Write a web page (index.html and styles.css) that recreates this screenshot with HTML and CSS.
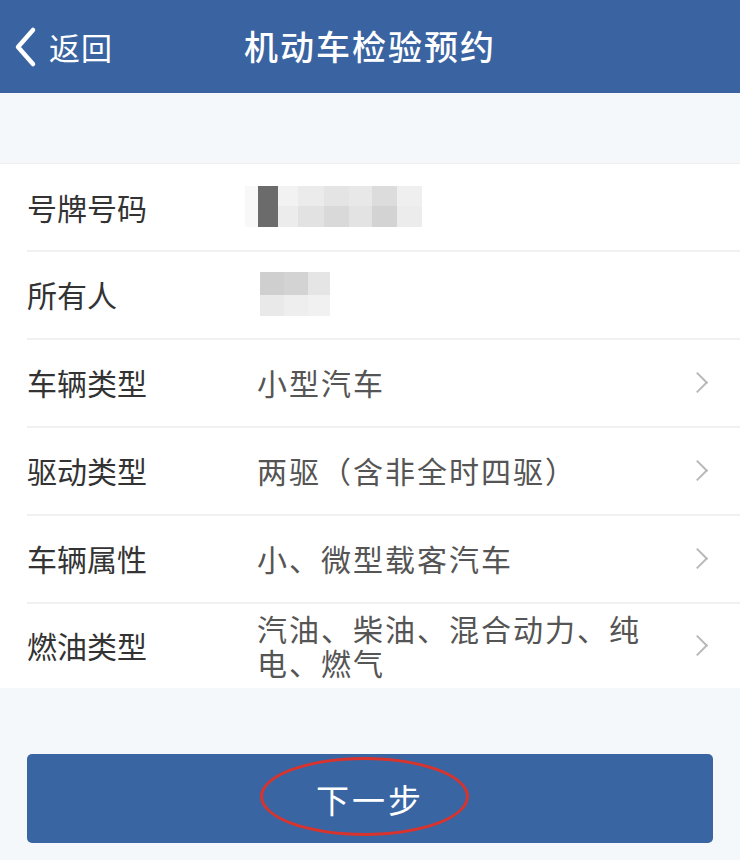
FILE: index.html
```html
<!DOCTYPE html>
<html lang="zh-CN">
<head>
    <meta charset="UTF-8">
    <meta name="viewport" content="width=device-width, initial-scale=1.0">
    <title>机动车检验预约</title>
    <link rel="stylesheet" href="styles.css">
</head>
<body>
    <div class="header">
        <a class="back" href="#">
            <svg class="back-icon" width="28" height="42" viewBox="0 0 28 42">
                <path d="M22 4 L7 21 L22 38" fill="none" stroke="#fff" stroke-width="4.5" stroke-linecap="round" stroke-linejoin="round"/>
            </svg>
            <span>返回</span>
        </a>
        <h1>机动车检验预约</h1>
        <div></div>
    </div>

    <div class="spacer"></div>

    <ul class="form-list">
        <li class="row">
            <div class="label">号牌号码</div>
            <div class="value">
                <div class="mosaic plate">
                    <span></span><span></span><span></span><span></span><span></span><span></span><span></span><span></span>
                    <span></span><span></span><span></span><span></span><span></span><span></span><span></span><span></span>
                </div>
            </div>
        </li>
        <li class="row">
            <div class="label">所有人</div>
            <div class="value">
                <div class="mosaic owner">
                    <span></span><span></span><span></span>
                    <span></span><span></span><span></span>
                </div>
            </div>
        </li>
        <li class="row">
            <div class="label">车辆类型</div>
            <div class="value">小型汽车</div>
            <div class="arrow"></div>
        </li>
        <li class="row">
            <div class="label">驱动类型</div>
            <div class="value">两驱（含非全时四驱）</div>
            <div class="arrow"></div>
        </li>
        <li class="row">
            <div class="label">车辆属性</div>
            <div class="value">小、微型载客汽车</div>
            <div class="arrow"></div>
        </li>
        <li class="row">
            <div class="label">燃油类型</div>
            <div class="value">汽油、柴油、混合动力、纯电、燃气</div>
            <div class="arrow"></div>
        </li>
    </ul>

    <div class="footer">
        <button class="next-btn">
            <span>下一步</span>
            <i class="circle-mark"></i>
        </button>
    </div>
</body>
</html>
```

FILE: styles.css
```css
* {
    margin: 0;
    padding: 0;
    box-sizing: border-box;
    font-family: "Noto Sans CJK SC", "Noto Sans", sans-serif;
}

body {
    background: #f5f8fa;
    width: 740px;
    min-height: 860px;
}

.header {
    height: 93px;
    background: #3a64a1;
    color: #fff;
    display: grid;
    grid-template-columns: 1fr auto 1fr;
    align-items: center;
}

.back {
    display: flex;
    align-items: center;
    gap: 10px;
    padding-left: 11px;
    color: #fff;
    text-decoration: none;
    font-size: 31px;
    letter-spacing: 1px;
}

.back span {
    line-height: 1;
}

.header h1 {
    font-size: 34px;
    font-weight: 500;
    letter-spacing: 2px;
    line-height: 1;
    padding-bottom: 2px;
}

.spacer {
    height: 70px;
}

.form-list {
    list-style: none;
    background: #fff;
    border-top: 1px solid #eceef0;
}

.row {
    display: flex;
    align-items: center;
    min-height: 88px;
    padding: 9px 24px 9px 27px;
    font-size: 30px;
    line-height: 34px;
    position: relative;
}

.row:first-child {
    min-height: 86px;
}

.row + .row::before {
    content: "";
    position: absolute;
    left: 27px;
    right: 0;
    top: 0;
    border-top: 2px solid #f1f1f1;
}

.row:last-child {
    min-height: 86px;
}

.label {
    width: 230px;
    flex-shrink: 0;
    color: #333;
}

.value {
    flex: 1;
    color: #555;
    letter-spacing: 2px;
    padding-right: 20px;
}

.arrow {
    width: 15px;
    height: 15px;
    border-top: 2.5px solid #b8b8b8;
    border-right: 2.5px solid #b8b8b8;
    transform: rotate(45deg);
    margin-right: 11px;
    flex-shrink: 0;
}

.mosaic {
    display: grid;
    filter: blur(0.6px);
}

.mosaic span {
    display: block;
}

.plate {
    grid-template-columns: 13px 20px 20px 26px 25px 23px 25px 25px;
    grid-template-rows: 20px 21px;
    margin-left: -12px;
    margin-top: -2px;
}

.plate span:nth-child(1), .plate span:nth-child(9) { background: #f8f8f8; }
.plate span:nth-child(2), .plate span:nth-child(10) { background: #6b6b6b; }
.plate span:nth-child(3) { background: #f2f2f2; }
.plate span:nth-child(11) { background: #ececec; }
.plate span:nth-child(4) { background: #ebebeb; }
.plate span:nth-child(12) { background: #e2e2e2; }
.plate span:nth-child(5) { background: #e4e4e4; }
.plate span:nth-child(13) { background: #d9d9d9; }
.plate span:nth-child(6) { background: #e8e8e8; }
.plate span:nth-child(14) { background: #e3e3e3; }
.plate span:nth-child(7) { background: #dcdcdc; }
.plate span:nth-child(15) { background: #d3d3d3; }
.plate span:nth-child(8) { background: #efefef; }
.plate span:nth-child(16) { background: #ececec; }

.owner {
    grid-template-columns: 24px 24px 22px;
    grid-template-rows: 23px 21px;
    margin-left: 3px;
    width: 70px;
}

.owner span:nth-child(1) { background: #cfcfcf; }
.owner span:nth-child(2) { background: #d3d3d3; }
.owner span:nth-child(3) { background: #e5e5e5; }
.owner span:nth-child(4) { background: #e9e9e9; }
.owner span:nth-child(5) { background: #eeeeee; }
.owner span:nth-child(6) { background: #f1f1f1; }

.footer {
    padding: 66px 27px 17px;
}

.next-btn {
    position: relative;
    width: 100%;
    height: 89px;
    background: #3a65a3;
    border: none;
    border-radius: 5px;
    color: #fff;
    font-size: 33px;
    letter-spacing: 3px;
    cursor: pointer;
}

.circle-mark {
    position: absolute;
    left: 233px;
    top: 3px;
    width: 209px;
    height: 79px;
    border: 3px solid #d8332c;
    border-radius: 50%;
}
```
